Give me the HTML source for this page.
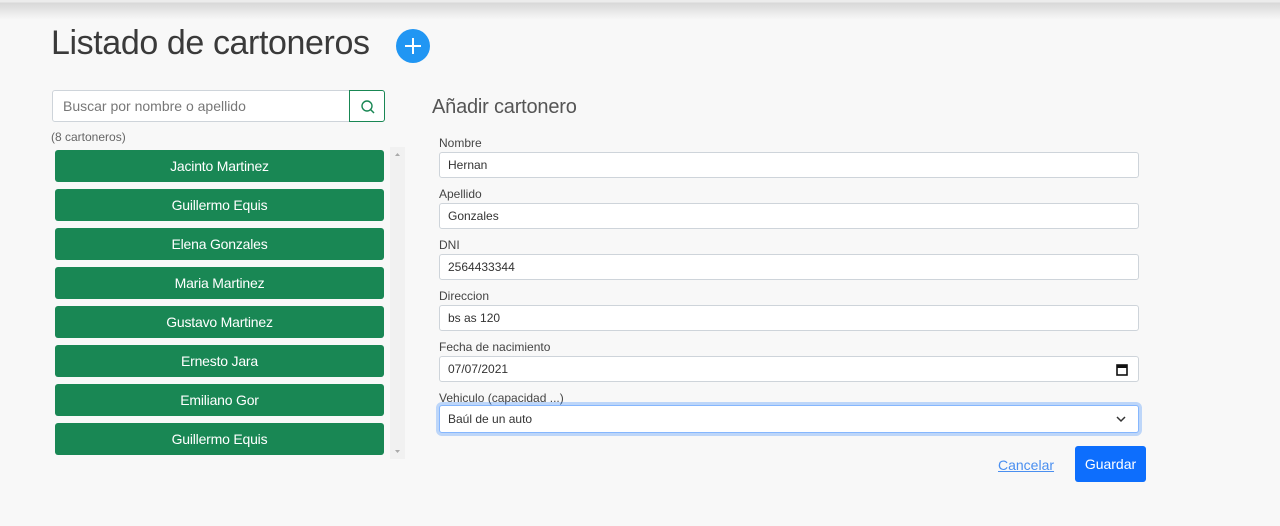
<!DOCTYPE html>
<html><head><meta charset="utf-8">
<style>
*{box-sizing:border-box;margin:0;padding:0}
html,body{width:1280px;height:526px;overflow:hidden;background:#f8f8f8;font-family:"Liberation Sans",sans-serif;color:#212529}
.top{position:absolute;left:0;top:0;width:1280px;height:20px;background:linear-gradient(#ececec 0,#ececec 2px,#d8d8d8 3px,#f8f8f8 20px)}
.a{position:absolute}
h1{position:absolute;left:51px;top:24px;font-size:34px;font-weight:normal;color:#3a3a3a;letter-spacing:-0.4px}
.plus{position:absolute;left:396px;top:29px;width:34px;height:34px;border-radius:50%;background:#2196f3}
.plus:before{content:"";position:absolute;left:9px;top:16px;width:16px;height:2px;background:#fff}
.plus:after{content:"";position:absolute;left:16px;top:9px;width:2px;height:16px;background:#fff}
.search{left:52px;top:90px;width:298px;height:32px;background:#fff;border:1px solid #ced4da;border-radius:3px 0 0 3px;font-size:14px;color:#777;padding:7px 10px}
.sbtn{left:349px;top:90px;width:36px;height:32px;border:1px solid #198754;border-radius:0 3px 3px 0;background:#fff}
.count{left:51px;top:130px;font-size:12px;color:#666}
.btn{position:absolute;left:55px;width:329px;height:32px;background:#198754;color:#fff;border-radius:3px;font-size:14px;text-align:center;line-height:32px;letter-spacing:-0.2px}
.sb{left:390px;top:147px;width:15px;height:312px;background:#f1f1f1}
h2{position:absolute;left:432px;top:96px;font-size:20px;font-weight:normal;color:#555;letter-spacing:-0.2px}
.lbl{position:absolute;left:439px;font-size:12px;color:#444}
.in{position:absolute;left:439px;width:700px;height:26px;background:#fff;border:1px solid #ced4da;border-radius:3px;font-size:12px;padding:5px 8px;color:#333}
.sel{border:1px solid #86b7fe;box-shadow:0 0 0 3px rgba(13,110,253,.25);height:28px;padding:6px 8px}
.can{left:998px;top:457px;font-size:14px;color:#4a8ff0;text-decoration:underline}
.gu{left:1075px;top:446px;width:71px;height:36px;background:#0d6efd;border-radius:3px;color:#fff;font-size:14px;text-align:center;line-height:36px}
</style></head><body>
<div class="top"></div>
<h1>Listado de cartoneros</h1>
<div class="plus"></div>
<div class="a search">Buscar por nombre o apellido</div>
<div class="a sbtn"><svg width="36" height="32" viewBox="0 0 36 32"><circle cx="17" cy="15" r="5" fill="none" stroke="#198754" stroke-width="1.4"/><path d="M20.5 18.5L24 22" stroke="#198754" stroke-width="1.5"/></svg></div>
<div class="a count">(8 cartoneros)</div>
<div class="btn" style="top:150px">Jacinto Martinez</div>
<div class="btn" style="top:189px">Guillermo Equis</div>
<div class="btn" style="top:228px">Elena Gonzales</div>
<div class="btn" style="top:267px">Maria Martinez</div>
<div class="btn" style="top:306px">Gustavo Martinez</div>
<div class="btn" style="top:345px">Ernesto Jara</div>
<div class="btn" style="top:384px">Emiliano Gor</div>
<div class="btn" style="top:423px">Guillermo Equis</div>
<div class="a sb"><svg width="15" height="312"><path d="M5 9L7.5 6L10 9Z" fill="#aaa"/><path d="M5 303L7.5 306L10 303Z" fill="#aaa"/></svg></div>
<h2>Añadir cartonero</h2>
<div class="lbl" style="top:136px">Nombre</div>
<div class="in" style="top:152px">Hernan</div>
<div class="lbl" style="top:187px">Apellido</div>
<div class="in" style="top:203px">Gonzales</div>
<div class="lbl" style="top:238px">DNI</div>
<div class="in" style="top:254px">2564433344</div>
<div class="lbl" style="top:289px">Direccion</div>
<div class="in" style="top:305px">bs as 120</div>
<div class="lbl" style="top:340px">Fecha de nacimiento</div>
<div class="in" style="top:356px">07/07/2021<svg style="position:absolute;right:10px;top:6px" width="12" height="13"><rect x="1" y="2" width="10" height="10" fill="none" stroke="#111" stroke-width="1.6"/><rect x="1" y="2" width="10" height="3" fill="#111"/></svg></div>
<div class="lbl" style="top:391px">Vehiculo (capacidad ...)</div>
<div class="in sel" style="top:405px">Baúl de un auto<svg style="position:absolute;right:12px;top:10px" width="10" height="7"><path d="M1 1L5 5L9 1" fill="none" stroke="#333" stroke-width="1.5"/></svg></div>
<div class="a can">Cancelar</div>
<div class="a gu">Guardar</div>
</body></html>
